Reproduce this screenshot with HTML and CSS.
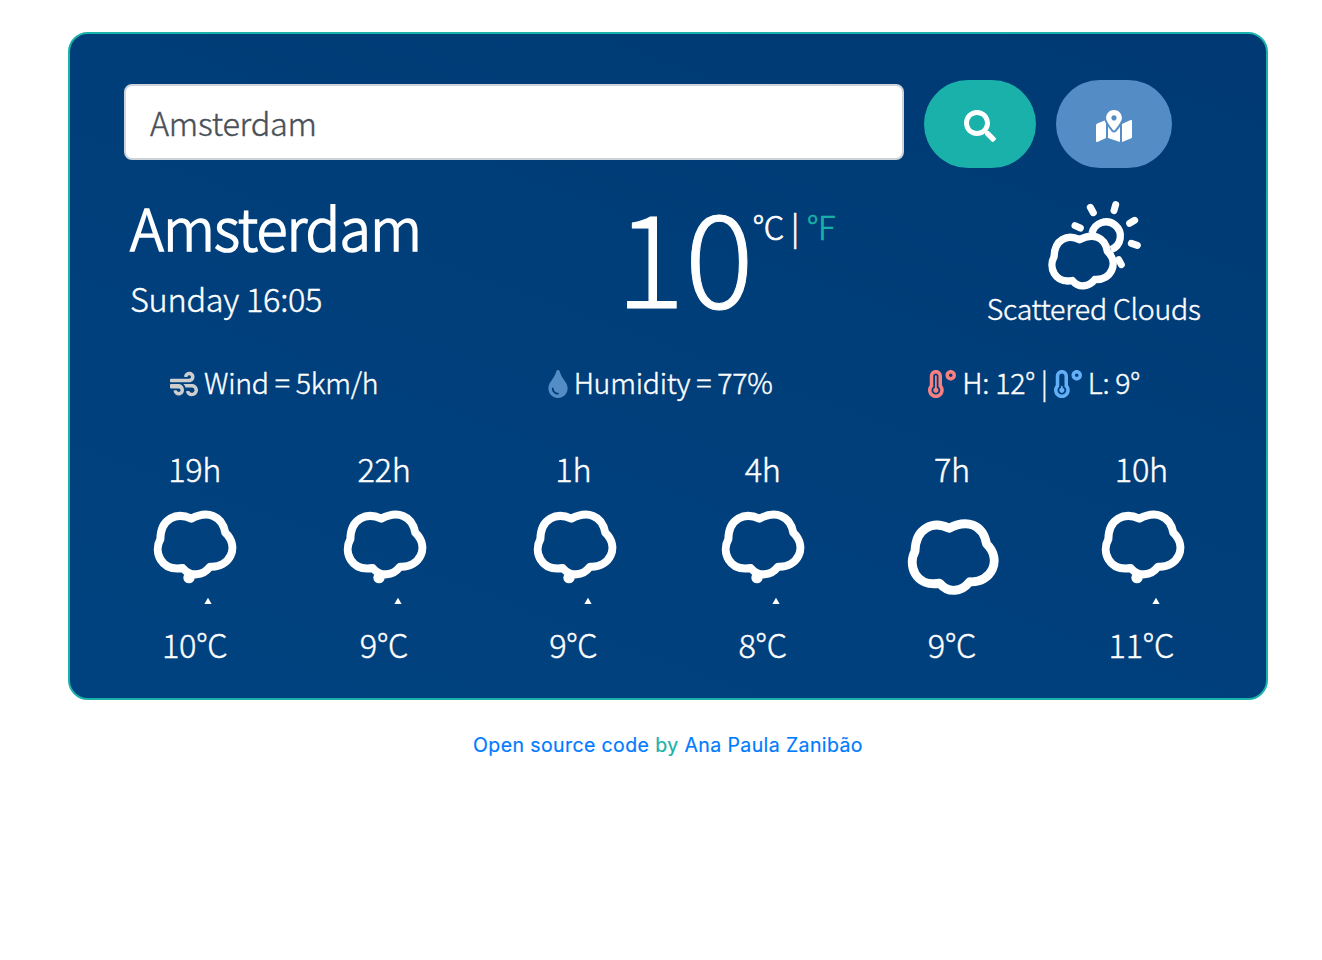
FILE: index.html
```
<!DOCTYPE html>
<html lang="en">
<head>
<meta charset="utf-8">
<title>Weather</title>
<link rel="stylesheet" href="styles.css">
</head>
<body>
<svg class="defs" width="0" height="0">
  <defs>
    <path id="cloud" d="M184 236C140 215 92 235 91 298C70 335 92 395 158 384C182 412 218 408 240 380C300 384 330 320 286 278C276 225 232 211 184 236Z"/>
    <g id="drizzle"><use href="#cloud" class="line"/><circle cx="177" cy="413" r="17" fill="#fff"/><path d="M234 473L246 494H222Z" fill="#fff"/></g>
  </defs>
</svg>
<main class="card">
  <form class="search">
    <div class="field">Amsterdam</div>
    <button type="button" class="btn btn-search" aria-label="Search"><svg width="32" height="32" viewBox="0 0 512 512"><path d="M505 442.7L405.3 343c-4.5-4.5-10.6-7-17-7H372c27.6-35.3 44-79.7 44-128C416 93.1 322.9 0 208 0S0 93.1 0 208s93.1 208 208 208c48.3 0 92.7-16.4 128-44v16.3c0 6.4 2.5 12.5 7 17l99.7 99.7c9.4 9.4 24.6 9.4 33.9 0l28.3-28.3c9.4-9.4 9.4-24.6.1-34zM208 336c-70.7 0-128-57.2-128-128 0-70.7 57.2-128 128-128 70.7 0 128 57.2 128 128 0 70.7-57.2 128-128 128z"/></svg></button>
    <button type="button" class="btn btn-map" aria-label="Current location"><svg width="36" height="32" viewBox="0 0 576 512"><path d="M288 0c-69.59 0-126 56.41-126 126 0 56.26 82.35 158.8 113.9 196.02 6.39 7.54 17.82 7.54 24.2 0C331.65 284.8 414 182.26 414 126 414 56.41 357.59 0 288 0zm0 168c-23.2 0-42-18.8-42-42s18.8-42 42-42 42 18.8 42 42-18.8 42-42 42zM20.12 215.95A32.006 32.006 0 0 0 0 245.66v250.32c0 11.32 11.43 19.06 21.94 14.86L160 448V214.92c-8.84-15.98-16.07-31.54-21.25-46.42L20.12 215.95zM288 359.67c-14.07 0-27.38-6.18-36.51-16.96-19.66-23.2-40.57-49.62-59.49-76.72v182l192 64V266c-18.92 27.09-39.82 53.52-59.49 76.72-9.13 10.77-22.44 16.95-36.51 16.95zm266.06-198.51L416 224v288l139.88-55.95A31.996 31.996 0 0 0 576 426.34V176.02c0-11.32-11.43-19.06-21.94-14.86z"/></svg></button>
  </form>
  <section class="current">
    <div class="place"><h1>Amsterdam</h1><p>Sunday 16:05</p></div>
    <div class="temp"><span class="degrees">10</span><span class="units"><span>°C</span><span class="bar">|</span><span class="fahrenheit">°F</span></span></div>
    <div class="sky">
      <svg class="picture" width="100" height="90" viewBox="252 30 300 270"><g class="rays"><path d="M345 107L361 114M391 52L400 68M467 44L462 62M509 100L524 91M514 160L532 166M476 209L484 224"/></g><path class="sun" d="M396 130A43 43 0 1 1 453 179"/><use href="#cloud" class="line thick" transform="translate(207.6 -47) scale(.82 .83)"/></svg>
      <p>Scattered Clouds</p>
    </div>
  </section>
  <section class="details">
    <div class="wind"><svg width="28" height="28" viewBox="0 0 512 512"><path d="M156.7 256H16c-8.8 0-16 7.2-16 16v48c0 8.8 7.2 16 16 16h142.2c15.9 0 30.8 10.9 33.4 26.6 3.3 20-12.1 37.4-31.6 37.4-14.1 0-26.1-9.2-30.4-21.9-2.1-6.3-8.6-10.1-15.2-10.1H81.6c-9.8 0-17.7 8.8-15.9 18.4 8.6 44.1 47.6 77.6 94.2 77.6 57.1 0 102.7-50.1 95.2-108.6C249 291 205.4 256 156.7 256zM16 224h336c59.7 0 106.8-54.8 93.8-116.7-7.6-36.2-36.9-65.5-73.1-73.1-55.4-11.6-105.1 24.9-114.9 75.5-1.9 9.6 6.1 18.3 15.8 18.3h32.8c6.7 0 13.1-3.8 15.2-10.1C325.9 105.2 337.9 96 352 96c19.4 0 34.9 17.4 31.6 37.4-2.6 15.7-17.4 26.6-33.4 26.6H16c-8.8 0-16 7.2-16 16v32c0 8.8 7.2 16 16 16zm384 32H243.7c19.3 16.6 33.2 38.8 39.8 64H400c26.5 0 48 21.5 48 48s-21.5 48-48 48c-17.9 0-33.3-9.9-41.6-24.4-2.9-5-8.7-7.6-14.5-7.6h-33.8c-10.9 0-19 10.8-15.3 21.1 17.8 50.6 70.5 84.8 129.4 72.3 41.2-8.7 75.1-41.6 84.7-82.7C526 321.5 470.5 256 400 256z"/></svg><span>Wind = 5km/h</span></div>
    <div class="humidity"><svg width="20" height="28" viewBox="0 0 352 512"><path d="M205.22 22.09c-7.94-28.78-49.44-30.12-58.44 0C100.01 179.85 0 222.72 0 333.91 0 432.35 78.72 512 176 512s176-79.65 176-178.09c0-111.75-99.79-153.34-146.78-311.82zM176 448c-61.75 0-112-50.25-112-112 0-8.84 7.16-16 16-16s16 7.16 16 16c0 44.11 35.89 80 80 80 8.84 0 16 7.16 16 16s-7.16 16-16 16z"/></svg><span>Humidity = 77%</span></div>
    <div class="range"><svg class="high" width="28" height="28" viewBox="0 0 512 512"><path d="M416 0c-52.9 0-96 43.1-96 96s43.1 96 96 96 96-43.1 96-96-43.1-96-96-96zm0 128c-17.7 0-32-14.3-32-32s14.3-32 32-32 32 14.3 32 32-14.3 32-32 32zm-160-16C256 50.1 205.9 0 144 0S32 50.1 32 112v166.5C12.3 303.2 0 334 0 368c0 79.5 64.5 144 144 144s144-64.5 144-144c0-34-12.3-64.9-32-89.5V112zM144 448c-44.1 0-80-35.9-80-80 0-25.5 12.2-48.9 32-63.8V112c0-26.5 21.5-48 48-48s48 21.5 48 48v192.2c19.8 14.8 32 38.3 32 63.8 0 44.1-35.9 80-80 80zm16-125.1V112c0-8.8-7.2-16-16-16s-16 7.2-16 16v210.9c-18.6 6.6-32 24.2-32 45.1 0 26.5 21.5 48 48 48s48-21.5 48-48c0-20.9-13.4-38.5-32-45.1z"/></svg><span>H: 12°</span><span>|</span><svg class="low" width="28" height="28" viewBox="0 0 512 512"><path d="M416 0c-52.9 0-96 43.1-96 96s43.1 96 96 96 96-43.1 96-96-43.1-96-96-96zm0 128c-17.7 0-32-14.3-32-32s14.3-32 32-32 32 14.3 32 32-14.3 32-32 32zm-160-16C256 50.1 205.9 0 144 0S32 50.1 32 112v166.5C12.3 303.2 0 334 0 368c0 79.5 64.5 144 144 144s144-64.5 144-144c0-34-12.3-64.9-32-89.5V112zM144 448c-44.1 0-80-35.9-80-80 0-25.5 12.2-48.9 32-63.8V112c0-26.5 21.5-48 48-48s48 21.5 48 48v192.2c19.8 14.8 32 38.3 32 63.8 0 44.1-35.9 80-80 80zm16-125.1V304c0-8.8-7.2-16-16-16s-16 7.2-16 16v18.9c-18.6 6.6-32 24.2-32 45.1 0 26.5 21.5 48 48 48s48-21.5 48-48c0-20.9-13.4-38.5-32-45.1z"/></svg><span>L: 9°</span></div>
  </section>
  <section class="forecast">
    <div class="slot"><span>19h</span><svg class="picture" width="100" height="100" viewBox="45 192 300 300"><use href="#drizzle"/></svg><span>10°C</span></div>
    <div class="slot shifted"><span>22h</span><svg class="picture" width="100" height="100" viewBox="45 192 300 300"><use href="#drizzle"/></svg><span>9°C</span></div>
    <div class="slot shifted"><span>1h</span><svg class="picture" width="100" height="100" viewBox="45 192 300 300"><use href="#drizzle"/></svg><span>9°C</span></div>
    <div class="slot"><span>4h</span><svg class="picture" width="100" height="100" viewBox="45 192 300 300"><use href="#drizzle"/></svg><span>8°C</span></div>
    <div class="slot"><span>7h</span><svg class="picture" width="100" height="100" viewBox="45 192 300 300"><use href="#cloud" class="line" transform="translate(-16 1.6) scale(1.1 1.115)"/></svg><span>9°C</span></div>
    <div class="slot shifted"><span>10h</span><svg class="picture" width="100" height="100" viewBox="45 192 300 300"><use href="#drizzle"/></svg><span>11°C</span></div>
  </section>
</main>
<footer><a>Open source code</a> by <a>Ana Paula Zanibão</a></footer>
</body>
</html>
```

FILE: styles.css
```
* { box-sizing: border-box; }
body { margin: 0; padding: 32px 54px 0 68px; background: #fff; font-family: "Noto Sans CJK JP", "Noto Sans CJK SC", sans-serif; font-weight: 300; color: #fff; }
.defs { position: absolute; }
h1, p { margin: 0; font-weight: inherit; }
svg { display: block; flex: none; fill: currentColor; }
span { white-space: nowrap; }
.card { width: 1200px; height: 668px; padding: 46px 30px 32px; border: 2px solid #19b1a9; border-radius: 20px; background: linear-gradient(200deg, #003973, #003e79 40%, #004280); letter-spacing: -.27px; -webkit-text-stroke: .4px; }
.search { display: flex; align-items: center; gap: 20px; height: 88px; padding-left: 24px; }
.field { width: 780px; height: 76px; margin-top: -4px; padding: 0 24px; border: 2px solid #ced4da; border-radius: 8px; background: #fff; color: #495057; font-size: 32.5px; line-height: 72px; }
.btn { display: flex; align-items: center; justify-content: center; height: 88px; padding: 4px 0 0; border: 0; border-radius: 44px; color: #fff; }
.btn-search { width: 112px; background: #19b1a9; }
.btn-map { width: 116px; background: #548dc5; }
.current { display: grid; grid-template-columns: repeat(3, 1fr); height: 172px; padding-top: 22px; }
.place { padding: 4px 0 0 30px; }
.place h1 { font-size: 57.5px; line-height: 64px; letter-spacing: -.9px; -webkit-text-stroke: 1.6px; }
.place p { margin-top: 18px; font-size: 32.5px; line-height: 44px; }
.temp { display: flex; align-items: flex-start; padding-left: 137px; }
.degrees { font-size: 129px; line-height: 124px; letter-spacing: 0; -webkit-text-stroke: 1px; }
.units { display: flex; margin-left: -1px; padding-top: 14px; font-size: 32.5px; line-height: 44px; -webkit-text-stroke: .7px; }
.bar { margin: 0 8px 0 7px; }
.fahrenheit { color: #19b1a9; }
.sky { display: flex; flex-direction: column; align-items: center; padding: 10px 0 0 94px; font-size: 28.5px; line-height: 40px; }
.sky p { margin-top: -2px; }
.details { display: grid; grid-template-columns: repeat(3, 1fr); height: 106px; padding-top: 22px; font-size: 28.5px; line-height: 40px; }
.details > div { display: flex; align-items: center; gap: 6px; height: 40px; padding-left: 70px; }
.details svg { margin-top: 4px; }
.details .humidity { padding-left: 69px; }
.details .range { padding-left: 71px; }
.wind svg { color: #cecece; }
.humidity svg { color: #548dc5; }
.high { color: #f98080; }
.low { color: #63b0f8; }
.picture { filter: blur(.5px); }
.line { fill: none; stroke: #fff; stroke-width: 24; stroke-linejoin: round; }
.thick { stroke-width: 27; }
.sun { fill: none; stroke: #fff; stroke-width: 22; }
.rays { fill: none; stroke: #fff; stroke-width: 21; stroke-linecap: round; }
.forecast { display: grid; grid-template-columns: repeat(6, 1fr); font-size: 32.5px; line-height: 44px; text-align: center; }
.slot { display: flex; flex-direction: column; align-items: center; }
.slot svg { margin: 14px 0 18px; }
.shifted svg { margin-left: 2.5px; }
footer { width: 1200px; padding-top: 30px; font: 400 19.5px/30px Inter, sans-serif; letter-spacing: .4px; -webkit-text-stroke: .2px; color: #19b1a9; text-align: center; }
footer a { color: #007bff; }
```
